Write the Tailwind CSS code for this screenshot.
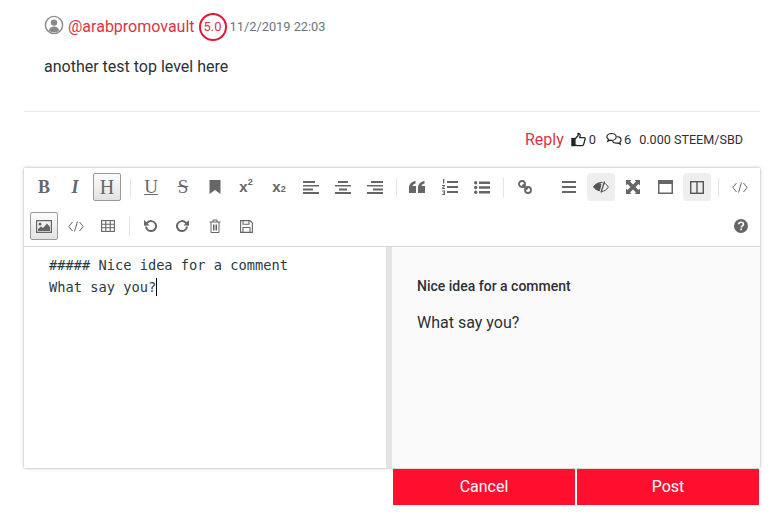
<!DOCTYPE html>
<html>
<head>
<meta charset="utf-8">
<script src="https://cdn.jsdelivr.net/npm/@tailwindcss/browser@4"></script>
</head>
<body class="bg-white font-['Roboto',sans-serif] text-[#2c3136] overflow-hidden">
<div class="w-[781px] h-[522px] pl-[24px] pr-[21px] pt-[13px] overflow-hidden">
  <div class="pl-[20px] flex items-center h-[28px]">
    <svg class="w-[20px] h-[20px] mr-[4px] -mt-[5px]" viewBox="0 0 20 20"><circle cx="10" cy="10" r="8.6" fill="none" stroke="#8a8a8a" stroke-width="1.4"/><circle cx="10" cy="7.6" r="3.2" fill="#8a8a8a"/><path d="M4.8 15.6c.6-3 2.6-4.2 5.2-4.2s4.6 1.2 5.2 4.2c-1.4 1.3-3.2 1.9-5.2 1.9s-3.8-.6-5.2-1.9z" fill="#8a8a8a"/></svg>
    <span class="text-[16px] text-[#dc3545] leading-none">@arabpromovault</span>
    <span class="ml-[4px] w-[28px] h-[28px] rounded-full border-2 border-[#dc1a36] flex items-center justify-center text-[13px] text-[#dc3545]">5.0</span>
    <span class="ml-[3px] text-[12.8px] text-[#6c757d]">11/2/2019 22:03</span>
  </div>
  <p class="pl-[20px] mt-[14px] text-[16px] leading-[24px]">another test top level here</p>
  <div class="mt-[32px] border-t border-[#e9e9e9] h-[19px]"></div>
  <div class="flex items-center justify-end h-[20px] pr-[17px]">
    <span class="text-[16px] text-[#dc3545]">Reply</span>
    <svg class="ml-[7px] -mt-[1px] w-[15px] h-[15px]" viewBox="0 0 16 16" fill="none" stroke="#212529" stroke-width="1.4"><rect x="1" y="7" width="3.2" height="7.5" fill="#212529"/><path d="M4.2 7.5 7.5 4V1.5c1.5 0 2.3 1 2.2 2.4L9.4 6H14c1 0 1.4.9 1 1.7l-1.6 5.8c-.2.7-.7 1-1.4 1H6.5l-2.3-.8"/></svg>
    <span class="ml-[3px] text-[12.8px]">0</span>
    <svg class="ml-[10px] -mt-[1px] w-[16px] h-[15px]" viewBox="0 0 16 15" fill="none" stroke="#212529" stroke-width="1.2"><path d="M5.6 1.5c2.6 0 4.6 1.5 4.6 3.4S8.200 8.300 5.600 8.300c-.6 0-1.100-.1-1.600-.2L1.800 9.200l.7-1.900C1.400 6.600.9 5.800.9 4.900c0-1.900 2.100-3.400 4.700-3.400z"/><path d="M11.300 4.600c2.200.3 3.800 1.600 3.800 3.300 0 .9-.5 1.700-1.300 2.300l.6 2-2.400-1.200c-.5.1-1 .2-1.500.2-1.900 0-3.500-.9-4.100-2.200"/></svg>
    <span class="ml-[2px] text-[12.8px]">6</span>
    <span class="ml-[8px] text-[12.6px]">0.000 STEEM/SBD</span>
  </div>
  <div class="mt-[18px] w-[736px] shadow-[0_0_3px_rgba(0,0,0,0.35)]">
    <div class="h-[79px] border-b border-[#d8d8d8] bg-white pt-[5px] pl-[5px] text-[#666666]">
      <div class="flex items-center h-[28px]">
        <span class="w-[30px] h-[28px] flex items-center justify-center font-['Liberation_Serif',serif] font-bold text-[18px]">B</span>
        <span class="ml-[1px] w-[30px] h-[28px] flex items-center justify-center font-['Liberation_Serif',serif] italic font-bold text-[18px]">I</span>
        <span class="ml-[3px] w-[28px] h-[28px] flex items-center justify-center font-['Liberation_Serif',serif] text-[20px] border border-[#999] rounded-[2px] bg-gradient-to-b from-[#fcfcfc] to-[#e2e2e2]">H</span>
        <span class="ml-[9px] w-px h-[19px] bg-[#e4e4e4]"></span>
        <span class="ml-[5px] w-[30px] flex items-center justify-center font-['Liberation_Serif',serif] underline text-[19px] leading-[20px]">U</span>
        <span class="ml-[2px] w-[30px] flex items-center justify-center font-['Liberation_Serif',serif] line-through text-[19px] leading-[20px]">S</span>
        <span class="ml-[2px] w-[30px] flex justify-center"><svg class="w-[12px] h-[14px]" viewBox="0 0 12 14" fill="#666"><path d="M.5 0h11v14L6 10 .5 14z"/></svg></span>
        <span class="ml-[1px] w-[30px] flex items-center justify-center font-bold text-[15px] font-['Liberation_Sans',sans-serif]">x<sup class="text-[9px] leading-none">2</sup></span>
        <span class="ml-[3px] w-[30px] flex items-center justify-center font-bold text-[15px] font-['Liberation_Sans',sans-serif]">x<sub class="text-[9px] leading-none">2</sub></span>
        <span class="ml-[2px] w-[30px] flex justify-center"><svg class="w-[16px] h-[13px]" viewBox="0 0 16 13" fill="#666"><path d="M0 0h12v2H0zM0 4h16v1.500H0zM0 7.500h10v2H0zM0 11h16v2H0z"/></svg></span>
        <span class="ml-[2px] w-[30px] flex justify-center"><svg class="w-[16px] h-[13px]" viewBox="0 0 16 13" fill="#666"><path d="M3 0h10v2H3zM0 4h16v1.500H0zM4 7.500h8v2H4zM0 11h16v2H0z"/></svg></span>
        <span class="ml-[2px] w-[30px] flex justify-center"><svg class="w-[16px] h-[13px]" viewBox="0 0 16 13" fill="#666"><path d="M4 0h12v2H4zM0 4h16v1.500H0zM6 7.500h10v2H6zM0 11h16v2H0z"/></svg></span>
        <span class="ml-[6px] w-px h-[19px] bg-[#e4e4e4]"></span>
        <span class="ml-[5px] w-[30px] flex justify-center"><svg class="w-[16px] h-[12px]" viewBox="0 0 16 12" fill="#666"><path d="M0 7c0-3.500 2-6.300 6.500-7v2.500C4.500 3 3.700 4 3.600 5H7v7H0zM9 7c0-3.500 2-6.300 6.500-7v2.500c-2 .5-2.800 1.500-2.900 2.500H16v7H9z"/></svg></span>
        <span class="ml-[3px] w-[30px] flex justify-center"><svg class="w-[16px] h-[16px]" viewBox="0 0 16 16" fill="#666"><path d="M5 2h11v2H5zM5 7h11v2H5zM5 12h11v2H5z"/><path d="M1 0h1.300v4.500H1zM0 6h3v1L1.200 9H3v1H0V9l1.800-2H0zM0 11.500h3V16H0v-1h2v-.7H.8v-.8H2v-.9H0z"/></svg></span>
        <span class="ml-[2px] w-[30px] flex justify-center"><svg class="w-[16px] h-[13px]" viewBox="0 0 16 13" fill="#666"><path d="M5 .500h11v2.500H5zM5 5.200h11v2.500H5zM5 10h11v2.500H5z"/><circle cx="1.700" cy="1.700" r="1.700"/><circle cx="1.700" cy="6.500" r="1.700"/><circle cx="1.700" cy="11.300" r="1.700"/></svg></span>
        <span class="ml-[6px] w-px h-[19px] bg-[#e4e4e4]"></span>
        <span class="ml-[6px] w-[30px] flex justify-center"><svg class="w-[14px] h-[14px]" viewBox="0 0 14 14" fill="none" stroke="#666" stroke-width="1.800"><circle cx="4" cy="4" r="3"/><circle cx="10" cy="10" r="3"/><path d="M4.500 4.500l5 5"/></svg></span>
        <span class="ml-[14px] w-[30px] flex justify-center"><svg class="w-[14px] h-[12px]" viewBox="0 0 14 12" fill="#666"><path d="M0 0h14v2H0zM0 5h14v2H0zM0 10h14v2H0z"/></svg></span>
        <span class="ml-[3px] w-[28px] h-[28px] rounded-[4px] bg-[#eeeeee] flex items-center justify-center"><svg class="w-[16px] h-[12px]" viewBox="0 0 16 12" fill="none" stroke="#555" stroke-width="1"><path d="M.6 6C2.500 3 5 1.500 8 1.500S13.500 3 15.400 6C13.500 9 11 10.500 8 10.500"/><path d="M.6 6C1.800 4.300 3.500 3 5.500 2.500L8 3 6.500 9.800C4 9.300 2 8 .6 6z" fill="#555"/><path d="M10.500 .5 7.500 11.500" stroke="#eee" stroke-width="1"/><path d="M11.500 .5 8 11.500" stroke-width="1.300"/></svg></span>
        <span class="ml-[3px] w-[30px] flex justify-center"><svg class="w-[14px] h-[14px]" viewBox="0 0 14 14" fill="#666"><path d="M0 0h5.500L4 1.500 7 4.500 10 1.500 8.500 0H14v5.500L12.500 4 9.500 7 12.500 10 14 8.500V14H8.500L10 12.500 7 9.500 4 12.500 5.500 14H0V8.500L1.500 10 4.500 7 1.500 4 0 5.500z"/></svg></span>
        <span class="ml-[2px] w-[30px] flex justify-center"><svg class="w-[15px] h-[14px]" viewBox="0 0 15 14" fill="#666"><path d="M0 0h15v14H0zM1.500 4v8.500h12V4z" fill-rule="evenodd"/></svg></span>
        <span class="ml-[3px] w-[28px] h-[28px] rounded-[4px] bg-[#eeeeee] flex items-center justify-center"><svg class="w-[14px] h-[13px]" viewBox="0 0 14 13" fill="none" stroke="#555" stroke-width="1.400"><rect x=".7" y=".7" width="12.600" height="11.600"/><path d="M7 .7v11.600"/></svg></span>
        <span class="ml-[7px] w-px h-[19px] bg-[#e4e4e4]"></span>
        <span class="ml-[6px] w-[30px] flex justify-center"><svg class="w-[16px] h-[11px]" viewBox="0 0 16 11" fill="none" stroke="#666" stroke-width="1"><path d="M4.500 1 .8 5.500 4.500 10M11.500 1l3.700 4.500L11.500 10M9.500 .5l-3 10"/></svg></span>
      </div>
      <div class="flex items-center h-[28px] mt-[11px]">
        <span class="w-[28px] h-[28px] ml-[1px] flex items-center justify-center border border-[#999] rounded-[2px] bg-gradient-to-b from-[#fcfcfc] to-[#e2e2e2]"><svg class="w-[16px] h-[13px]" viewBox="0 0 16 13"><path d="M0 0h16v13H0zM1.200 1.200v10.600h13.600V1.200z" fill="#666" fill-rule="evenodd"/><circle cx="4" cy="4" r="1.500" fill="#666"/><path d="M2 11V9l3-2.500 2 1.500 4-4.500L14 7v4z" fill="#666"/></svg></span>
        <span class="ml-[3px] w-[30px] flex justify-center"><svg class="w-[16px] h-[11px]" viewBox="0 0 16 11" fill="none" stroke="#666" stroke-width="1"><path d="M4.500 1 .8 5.500 4.500 10M11.500 1l3.700 4.500L11.500 10M9.500 .5l-3 10"/></svg></span>
        <span class="ml-[2px] w-[30px] flex justify-center"><svg class="w-[14px] h-[12px]" viewBox="0 0 14 12" fill="none" stroke="#666" stroke-width="1.100"><rect x=".6" y=".6" width="12.800" height="10.800"/><path d="M.6 4.200h12.800M.6 7.800h12.800M4.800.6v10.800M9.200.6v10.800"/></svg></span>
        <span class="ml-[6px] w-px h-[19px] bg-[#e4e4e4]"></span>
        <span class="ml-[5px] w-[30px] flex justify-center"><svg class="w-[14px] h-[14px]" viewBox="0 0 14 14" fill="none" stroke="#666" stroke-width="2"><path d="M3 7.500a5 5 0 1 0 1.500-4L1.500 6"/><path d="M1 1v5.500h5.500" fill="#666" stroke="none"/></svg></span>
        <span class="ml-[3px] w-[30px] flex justify-center"><svg class="w-[14px] h-[14px]" viewBox="0 0 14 14" fill="none" stroke="#666" stroke-width="2"><path d="M11 7.500a5 5 0 1 1-1.500-4L12.500 6"/><path d="M13 1v5.500H7.500" fill="#666" stroke="none"/></svg></span>
        <span class="ml-[2px] w-[30px] flex justify-center"><svg class="w-[12px] h-[14px]" viewBox="0 0 12 14" fill="none" stroke="#666" stroke-width="1"><path d="M.5 3h11M4 3V1h4v2M2 3v10.500h8V3M4.500 5.500v6M6 5.500v6M7.500 5.500v6"/></svg></span>
        <span class="ml-[1px] w-[30px] flex justify-center"><svg class="w-[13px] h-[13px]" viewBox="0 0 13 13" fill="none" stroke="#666" stroke-width="1.100"><path d="M.6.6h9.300l2.500 2.500v9.300H.6z"/><path d="M3 .6v3.600h6V.6M3 12.400V7.500h7v4.900"/></svg></span>
        <span class="ml-auto mr-[12px]"><svg class="w-[14px] h-[14px]" viewBox="0 0 14 14"><circle cx="7" cy="7" r="7" fill="#666"/><path d="M4.700 5.300C4.800 4 5.800 3.200 7.100 3.200c1.300 0 2.300.8 2.300 2 0 1.800-2 1.700-2 3.200" fill="none" stroke="#fff" stroke-width="1.600"/><rect x="6.300" y="9.500" width="1.700" height="1.700" fill="#fff"/></svg></span>
      </div>
    </div>
    <div class="flex h-[221px]">
      <div class="w-[362px] bg-white pl-[25px] pt-[7px] font-['DejaVu_Sans_Mono',monospace] text-[13.7px] leading-[22px] text-[#2b3a42]">
        <div>##### Nice idea for a comment</div>
        <div class="flex items-center">What say you?<span class="w-px h-[18px] bg-black"></span></div>
      </div>
      <div class="w-[6px] bg-[#e4e4e4]"></div>
      <div class="flex-1 bg-[#fafafa] pl-[25px] pt-[30px]">
        <div class="text-[14px] font-medium leading-[18px]">Nice idea for a comment</div>
        <p class="mt-[16px] text-[16px] leading-[24px]">What say you?</p>
      </div>
    </div>
  </div>
  <div class="flex h-[36px] mt-px ml-[369px] w-[366px] gap-[2px]">
    <button class="flex-1 bg-[#ff0f2e] text-white text-[16px]">Cancel</button>
    <button class="flex-1 bg-[#ff0f2e] text-white text-[16px]">Post</button>
  </div>
</div>
</body>
</html>
